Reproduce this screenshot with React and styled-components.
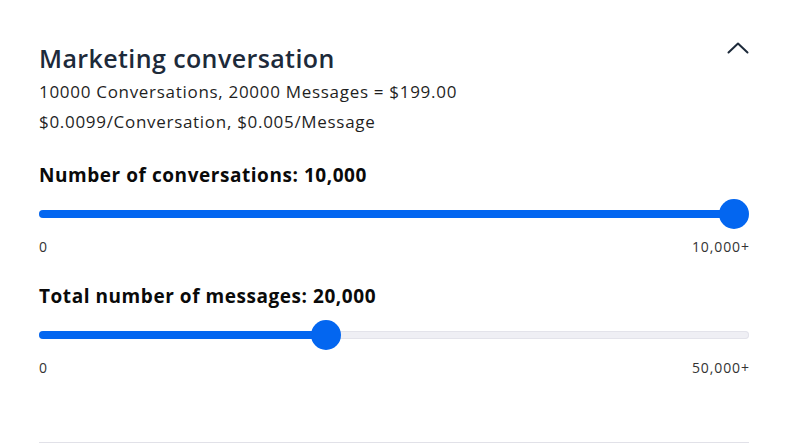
import styled, { createGlobalStyle } from "styled-components";

const GlobalStyle = createGlobalStyle`
  body {
    margin: 0;
    background: #ffffff;
    font-family: "Open Sans", "Noto Sans", sans-serif;
  }
`;

const Card = styled.section`
  width: 710px;
  padding: 39px 40px 0 39px;
  display: flex;
  flex-direction: column;
`;

const Header = styled.div`
  display: flex;
  justify-content: space-between;
  align-items: flex-start;
`;

const Title = styled.h2`
  margin: 0;
  font-size: 25px;
  line-height: 38px;
  font-weight: 600;
  letter-spacing: 0.4px;
  color: #1d2a3a;
`;

const ToggleButton = styled.button`
  border: 0;
  background: none;
  padding: 0;
  margin-top: -2px;
  width: 22px;
  height: 22px;
  display: flex;
  align-items: center;
  justify-content: center;
  cursor: pointer;
`;

const Info = styled.p`
  margin: 0;
  font-size: 17px;
  line-height: 30px;
  letter-spacing: 0.7px;
  color: #1f1f1f;
`;

const SliderBlock = styled.div`
  display: flex;
  flex-direction: column;
  margin-top: ${(p) => p.$top}px;
`;

const SliderLabel = styled.div`
  font-size: 19px;
  line-height: 26px;
  font-weight: 700;
  letter-spacing: 0.55px;
  color: #0a0a0a;
`;

const Track = styled.div`
  position: relative;
  height: 8px;
  margin-top: 22px;
  border-radius: 4px;
  background: #efeff4;
  box-shadow: inset 0 0 0 1px #e3e3ea;
`;

const Fill = styled.div`
  height: 100%;
  border-radius: 4px;
  background: #0366f0;
`;

const Thumb = styled.div`
  position: absolute;
  top: 50%;
  width: 30px;
  height: 30px;
  margin-top: -15px;
  border-radius: 50%;
  background: #0366f0;
`;

const Ticks = styled.div`
  display: flex;
  justify-content: space-between;
  margin-top: 20px;
  font-size: 14px;
  line-height: 18px;
  letter-spacing: 0.9px;
  color: #333333;
`;

const MaxTick = styled.span`
  margin-right: -0.9px;
`;

const Divider = styled.hr`
  margin: 65px 0 0;
  border: 0;
  height: 1px;
  background: #e1e1e8;
`;

const Slider = ({ label, value, max, maxLabel, top }) => {
  const ratio = value / max;
  return (
    <SliderBlock $top={top}>
      <SliderLabel>{label}</SliderLabel>
      <Track>
        <Fill style={{ width: `calc(15px + ${ratio} * (100% - 30px))` }} />
        <Thumb style={{ left: `calc(${ratio} * (100% - 30px))` }} />
      </Track>
      <Ticks>
        <span>0</span>
        <MaxTick>{maxLabel}</MaxTick>
      </Ticks>
    </SliderBlock>
  );
};

export default function App() {
  return (
    <>
      <GlobalStyle />
      <Card>
        <Header>
          <Title>Marketing conversation</Title>
          <ToggleButton aria-label="Collapse">
            <svg width="22" height="12" viewBox="0 0 22 12" fill="none">
              <path
                d="M1.5 10.5 L11 1.5 L20.5 10.5"
                stroke="#1d2a3a"
                strokeWidth="2"
                strokeLinecap="round"
                strokeLinejoin="round"
              />
            </svg>
          </ToggleButton>
        </Header>
        <Info>10000 Conversations, 20000 Messages = $199.00</Info>
        <Info>$0.0099/Conversation, $0.005/Message</Info>
        <Slider
          top={25}
          label="Number of conversations: 10,000"
          value={10000}
          max={10000}
          maxLabel="10,000+"
        />
        <Slider
          top={27}
          label="Total number of messages: 20,000"
          value={20000}
          max={50000}
          maxLabel="50,000+"
        />
        <Divider />
      </Card>
    </>
  );
}
